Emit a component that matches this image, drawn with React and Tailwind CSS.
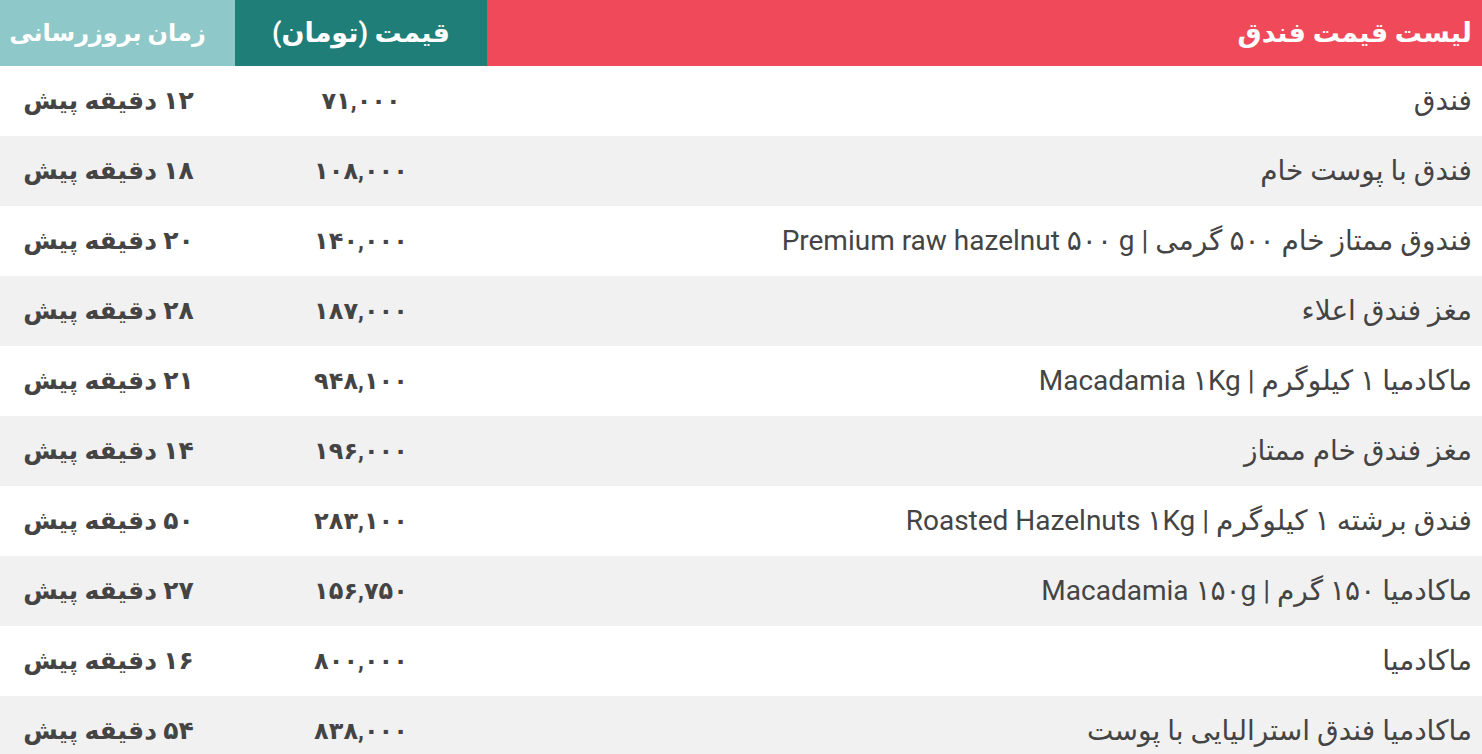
const rows = [
  ["فندق", "۷۱,۰۰۰", "۱۲ دقیقه پیش"],
  ["فندق با پوست خام", "۱۰۸,۰۰۰", "۱۸ دقیقه پیش"],
  ["فندوق ممتاز خام ۵۰۰ گرمی | Premium raw hazelnut ۵۰۰ g", "۱۴۰,۰۰۰", "۲۰ دقیقه پیش"],
  ["مغز فندق اعلاء", "۱۸۷,۰۰۰", "۲۸ دقیقه پیش"],
  ["ماکادمیا ۱ کیلوگرم | Macadamia ۱Kg", "۹۴۸,۱۰۰", "۲۱ دقیقه پیش"],
  ["مغز فندق خام ممتاز", "۱۹۶,۰۰۰", "۱۴ دقیقه پیش"],
  ["فندق برشته ۱ کیلوگرم | Roasted Hazelnuts ۱Kg", "۲۸۳,۱۰۰", "۵۰ دقیقه پیش"],
  ["ماکادمیا ۱۵۰ گرم | Macadamia ۱۵۰g", "۱۵۶,۷۵۰", "۲۷ دقیقه پیش"],
  ["ماکادمیا", "۸۰۰,۰۰۰", "۱۶ دقیقه پیش"],
  ["ماکادمیا فندق استرالیایی با پوست", "۸۳۸,۰۰۰", "۵۴ دقیقه پیش"],
];

export default function App() {
  return (
    <div dir="rtl" className="w-[1482px] bg-white text-[#444444]" style={{ fontFamily: "Roboto, 'DejaVu Sans', sans-serif" }}>
      <div className="flex h-[66px] text-white font-bold whitespace-nowrap">
        <div className="flex-1 bg-[#f04a5a] flex items-center pr-[10px] text-[27px]">لیست قیمت فندق</div>
        <div className="w-[252px] bg-[#207e79] flex items-center justify-center text-[27px]">قیمت (تومان)</div>
        <div className="w-[235px] bg-[#8fc8c9] flex items-center justify-center pr-[20px] text-[24px]">زمان بروزرسانی</div>
      </div>
      {rows.map((r, i) => (
        <div key={i} className={`flex h-[70px] whitespace-nowrap ${i % 2 ? "bg-[#f1f1f1]" : "bg-white"}`}>
          <div className="flex-1 flex items-center pr-[10px] text-[28px]">{r[0]}</div>
          <div className="w-[252px] flex items-center justify-center text-[24px] font-bold">{r[1]}</div>
          <div className="w-[235px] flex items-center justify-center pr-[18px] text-[25px] font-bold">{r[2]}</div>
        </div>
      ))}
    </div>
  );
}
